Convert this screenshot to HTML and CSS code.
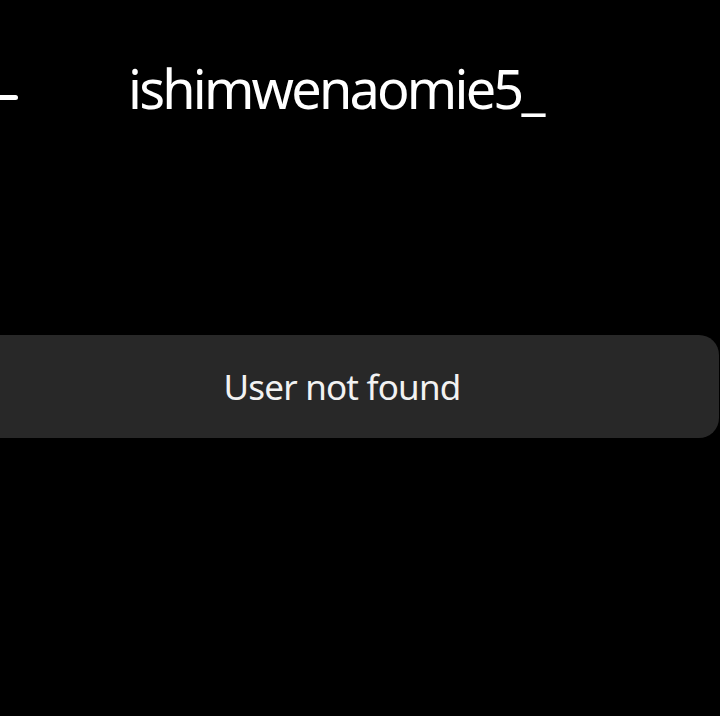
FILE: index.html
```html
<!DOCTYPE html>
<html>
<head>
<meta charset="utf-8">
<link rel="stylesheet" href="styles.css">
</head>
<body>
<div class="screen">
  <header class="topbar">
    <span class="back" aria-hidden="true"></span>
    <h1 class="username">ishimwenaomie5_</h1>
  </header>
  <div class="toast">User not found</div>
</div>
</body>
</html>
```
FILE: styles.css
```css
html, body {
  margin: 0;
  padding: 0;
  background: #000;
}
.screen {
  width: 720px;
  height: 716px;
  background: #000;
  overflow: hidden;
  font-family: "Noto Sans", "Open Sans", sans-serif;
  color: #fff;
}
.topbar {
  display: flex;
  align-items: center;
  height: 80px;
  margin-top: 54px;
}
.back {
  width: 18px;
  height: 5px;
  background: #fff;
  border-radius: 0 3px 3px 0;
  margin-right: 110px;
  margin-top: 6px;
}
.username {
  margin: -13px 0 0 0;
  font-size: 54px;
  font-weight: 400;
  letter-spacing: -2.8px;
}
.toast {
  margin-top: 201px;
  margin-left: -40px;
  width: 759px;
  height: 103px;
  background: #282828;
  border-radius: 20px;
  display: flex;
  align-items: center;
  justify-content: center;
  font-size: 35px;
  letter-spacing: -0.8px;
  color: #f2f2f2;
  padding-left: 5px;
  box-sizing: border-box;
}
```
